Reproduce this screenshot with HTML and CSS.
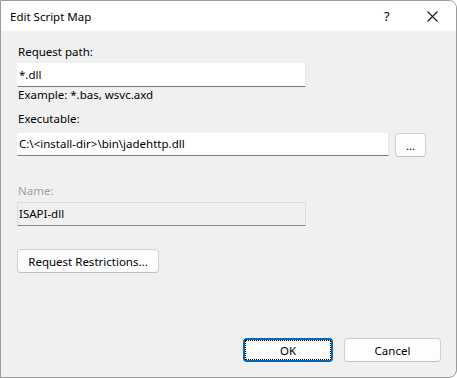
FILE: index.html
```html
<!DOCTYPE html>
<html>
<head>
<meta charset="utf-8">
<link rel="stylesheet" href="styles.css">
</head>
<body>
<div class="window">
  <div class="titlebar">
    <span class="title">Edit Script Map</span>
    <span class="help">?</span>
    <span class="close">
      <svg width="11" height="11" viewBox="0 0 11 11"><path d="M0.5 0.5 L10.5 10.5 M10.5 0.5 L0.5 10.5" stroke="#1a1a1a" stroke-width="1.1" fill="none"/></svg>
    </span>
  </div>
  <div class="content">
    <div class="label">Request path:</div>
    <div class="textbox short">*.dll</div>
    <div class="hint">Example: *.bas, wsvc.axd</div>
    <div class="label l2">Executable:</div>
    <div class="row">
      <div class="textbox long">C:\&lt;install-dir&gt;\bin\jadehttp.dll</div>
      <button class="btn dots">...</button>
    </div>
    <div class="label disabled">Name:</div>
    <div class="textbox short readonly">ISAPI-dll</div>
    <button class="btn restrict">Request Restrictions...</button>
    <div class="footer">
      <button class="btn ok"><span class="focus">OK</span></button>
      <button class="btn cancel">Cancel</button>
    </div>
  </div>
</div>
</body>
</html>
```

FILE: styles.css
```css
html, body {
  margin: 0;
  padding: 0;
  background: #ffffff;
}
body {
  font-family: "Noto Sans", "Open Sans", sans-serif;
  font-size: 11.5px;
  color: #000;
}
.window {
  width: 457px;
  height: 378px;
  box-sizing: border-box;
  border: 1px solid #9a9a9a;
  border-radius: 0 8px 8px 0;
  overflow: hidden;
  display: flex;
  flex-direction: column;
  background: #f0f0f0;
}
.titlebar {
  height: 30px;
  background: #ffffff;
  display: flex;
  align-items: center;
  flex-shrink: 0;
}
.title {
  margin-left: 9px;
  flex: 1;
  font-size: 11.5px;
}
.help {
  width: 14px;
  margin-right: 29px;
  font-size: 13px;
}
.close {
  width: 11px;
  height: 11px;
  margin-right: 18px;
  display: flex;
}
.content {
  flex: 1;
  display: flex;
  flex-direction: column;
  padding: 13px 0 0 16px;
}
.label {
  height: 16px;
  line-height: 16px;
  padding-left: 1px;
}
.l2 { margin-top: 8px; }
.disabled {
  color: #a0a0a0;
  margin-top: 26px;
}
.textbox {
  box-sizing: border-box;
  height: 24px;
  line-height: 21px;
  padding-left: 1px;
  background: #fff;
  border: 1px solid #e8e8e8;
  border-left-color: #fff;
  border-top-color: #fff;
  border-bottom: 1px solid #7a7a7a;
  margin-top: 3px;
}
.short { width: 289px; }
.long { width: 372px; height: 23px; line-height: 20px; margin-top: 0; }
.readonly {
  background: #f0f0f0;
  border-color: #dcdcdc;
  border-bottom-color: #8a8a8a;
  margin-top: 3px;
}
.hint {
  height: 16px;
  line-height: 16px;
  padding-left: 1px;
}
.row {
  display: flex;
  gap: 6px;
  margin-top: 6px;
  align-items: flex-start;
}
.btn {
  font-family: inherit;
  font-size: 11.5px;
  color: #000;
  background: #fdfdfd;
  border: 1px solid #d0d0d0;
  border-bottom-color: #c0c0c0;
  border-radius: 4px;
  height: 24px;
  padding: 0;
  box-sizing: border-box;
}
.dots { width: 31px; }
.restrict {
  width: 142px;
  margin-top: 23px;
  align-self: flex-start;
}
.footer {
  margin-top: auto;
  margin-bottom: 15px;
  display: flex;
  justify-content: flex-end;
  gap: 11px;
  padding-right: 15px;
}
.ok {
  width: 90px;
  border: 2px solid #0067c0;
}
.focus {
  display: flex;
  align-items: center;
  justify-content: center;
  height: 100%;
  box-sizing: border-box;
  border: 1px dotted #000;
}
.cancel { width: 97px; }
```
